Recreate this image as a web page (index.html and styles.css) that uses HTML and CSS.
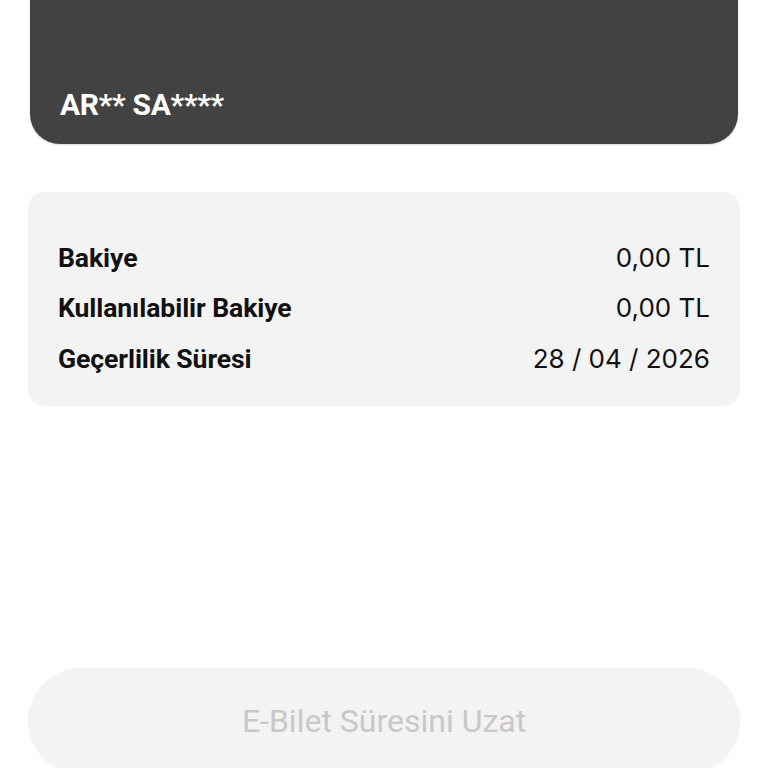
FILE: index.html
```html
<!DOCTYPE html>
<html lang="tr">
<head>
<meta charset="utf-8">
<link rel="stylesheet" href="styles.css">
</head>
<body>
<div class="page">
  <div class="card">
    <div class="card-name">AR** SA****</div>
  </div>
  <div class="info">
    <div class="row"><span class="label">Bakiye</span><span class="value">0,00 TL</span></div>
    <div class="row"><span class="label">Kullanılabilir Bakiye</span><span class="value">0,00 TL</span></div>
    <div class="row"><span class="label">Geçerlilik Süresi</span><span class="value">28 / 04 / 2026</span></div>
  </div>
  <div class="spacer"></div>
  <button class="btn" type="button">E-Bilet Süresini Uzat</button>
</div>
</body>
</html>
```
FILE: styles.css
```css
html, body {
  margin: 0;
  padding: 0;
  background: #ffffff;
  height: 768px;
  overflow: hidden;
}
.page {
  display: flex;
  flex-direction: column;
  padding: 0 28px;
  height: 768px;
  box-sizing: border-box;
}
.card {
  margin: 0 2px;
  height: 144px;
  background: #424242;
  border-radius: 0 0 30px 30px;
  box-shadow: 0 1px 2px rgba(0,0,0,0.15);
  display: flex;
  align-items: flex-end;
  padding: 0 30px 22px;
  box-sizing: border-box;
}
.card-name {
  font-family: Roboto, "Liberation Sans", sans-serif;
  font-weight: 700;
  font-size: 30px;
  color: #ffffff;
  letter-spacing: -0.3px;
}
.info {
  margin-top: 48px;
  background: #f3f3f3;
  border-radius: 16px;
  padding: 40px 30px 22px;
  display: flex;
  flex-direction: column;
}
.row {
  display: flex;
  justify-content: space-between;
  align-items: center;
  height: 50.5px;
}
.label {
  font-family: Roboto, "Liberation Sans", sans-serif;
  font-weight: 700;
  font-size: 26.6px;
  color: #111111;
  letter-spacing: -0.1px;
}
.value {
  font-family: Inter, "Noto Sans", sans-serif;
  font-weight: 400;
  font-size: 26px;
  color: #111111;
}
.spacer {
  flex: 1;
}
.btn {
  flex: none;
  height: 106px;
  margin-bottom: -6px;
  border: none;
  border-radius: 53px;
  background: #f3f3f3;
  color: #c8c8c8;
  font-family: Roboto, "Liberation Sans", sans-serif;
  font-size: 32px;
  font-weight: 400;
}
```
